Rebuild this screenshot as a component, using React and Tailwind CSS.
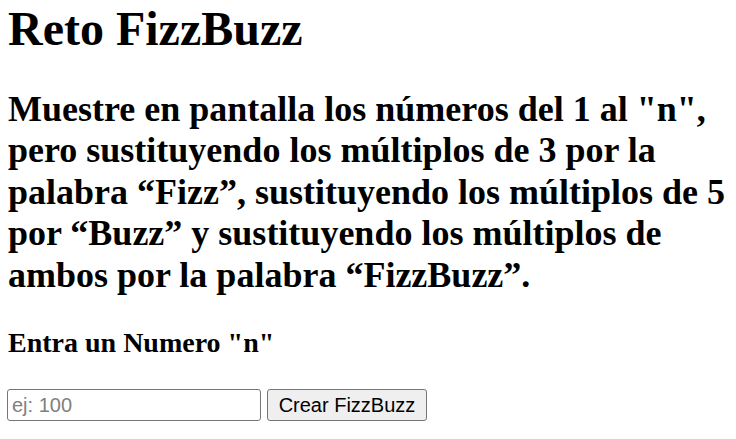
export default function App() {
  return (
    <div className="min-h-screen bg-white text-black pl-[7px] font-['Liberation_Serif','Times_New_Roman',serif]">
      <h1 className="mt-[1px] pl-px text-[48px] leading-[55px] font-bold">Reto FizzBuzz</h1>

      <p className="mt-[33px] pl-px text-[36px] leading-[41.4px] font-bold">
        Muestre en pantalla los números del 1 al "n", pero sustituyendo los múltiplos de 3 por la
        palabra “Fizz”, sustituyendo los múltiplos de 5 por “Buzz” y sustituyendo los múltiplos de
        ambos por la palabra “FizzBuzz”.
      </p>

      <h3 className="mt-[31px] pl-px text-[28px] leading-[32px] font-bold">Entra un Numero "n"</h3>

      <div className="mt-[30px] flex gap-[6px] font-['Liberation_Sans',Arial,sans-serif] text-[20px]">
        <input
          type="number"
          placeholder="ej: 100"
          className="w-[254px] h-[32px] px-[4px] border border-[#767676] rounded-[3px] bg-white text-black placeholder:text-[#808080] outline-none"
        />
        <button className="w-[160px] h-[32px] border border-[#767676] rounded-[3px] bg-[#efefef] text-black">
          Crear FizzBuzz
        </button>
      </div>
    </div>
  );
}
